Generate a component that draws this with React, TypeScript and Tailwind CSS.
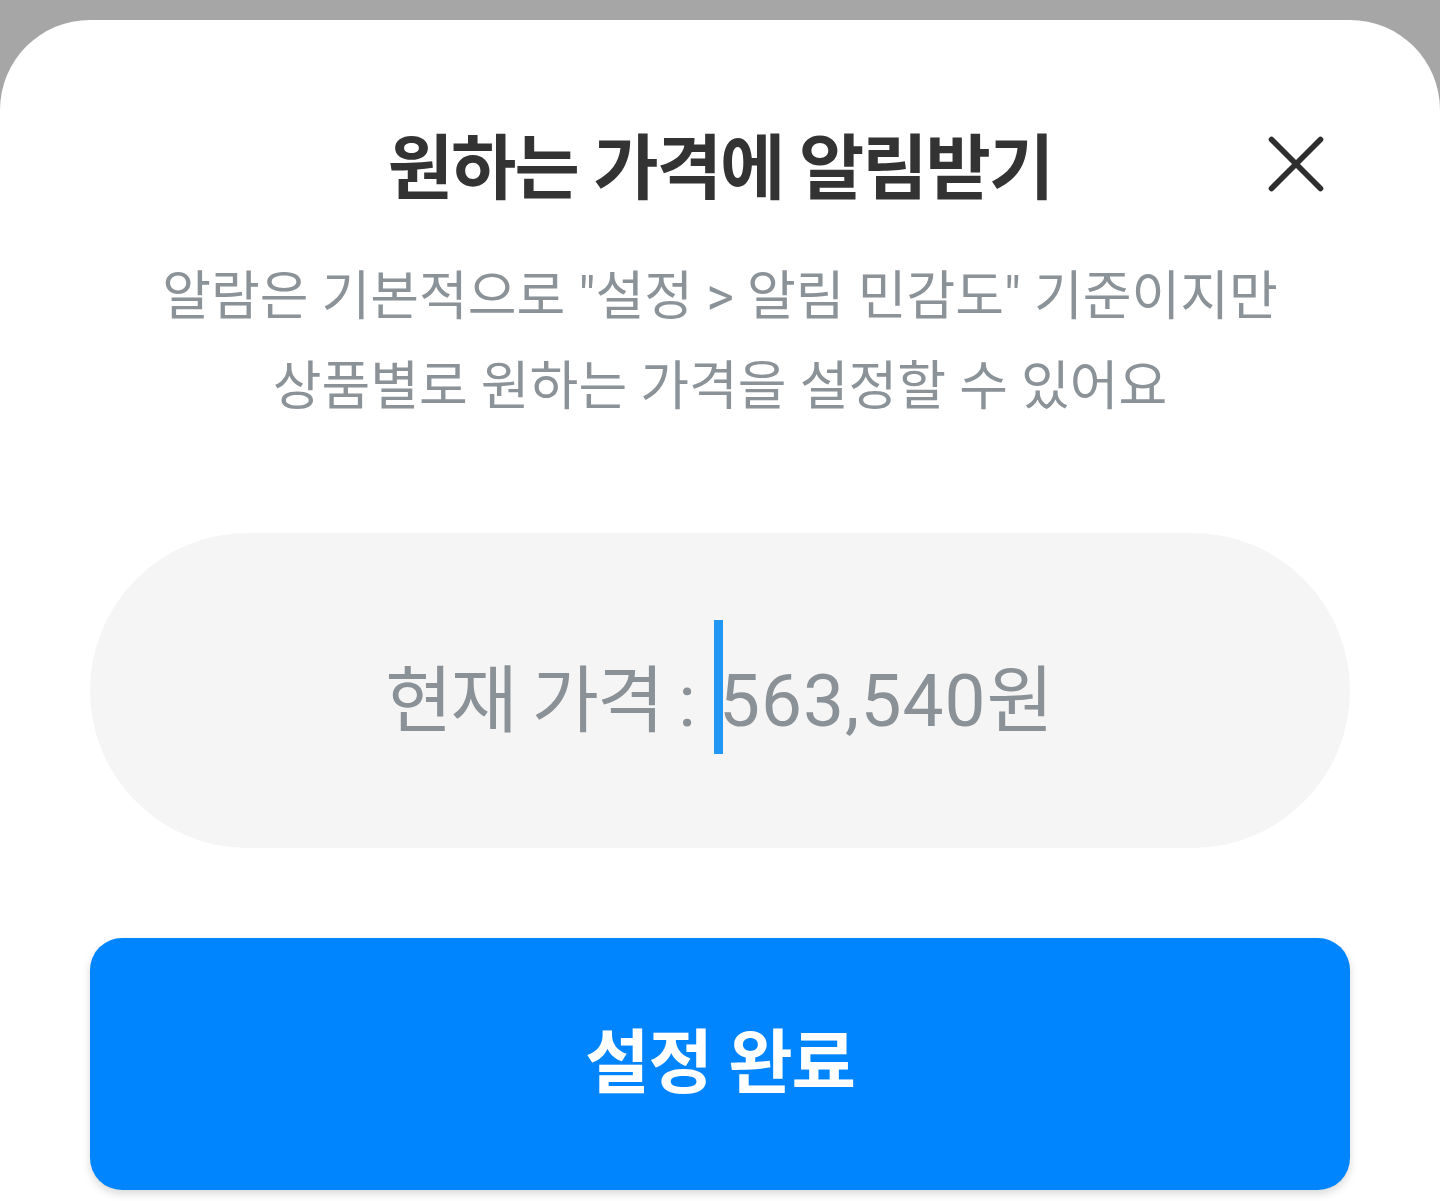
export default function App() {
  return (
    <div
      className="w-[1440px] h-[1201px] bg-[#a6a6a6] pt-[20px] overflow-hidden"
      style={{ fontFamily: 'Roboto, "Noto Sans CJK KR", sans-serif' }}
    >
      <div className="h-full bg-white rounded-t-[90px] px-[90px] flex flex-col">
        {/* Header */}
        <div className="relative flex justify-center pt-[113px]">
          <h2 className="text-[71px] leading-none font-bold text-[#333333] tracking-[-2px]">
            원하는 가격에 알림받기
          </h2>
          <button
            type="button"
            className="absolute right-[12px] top-[102px] w-[84px] h-[84px] flex items-center justify-center"
          >
            <svg viewBox="0 0 24 24" className="w-[84px] h-[84px]" fill="none">
              <path
                d="M5 5L19 19M19 5L5 19"
                stroke="#2e2e2e"
                strokeWidth="1.6"
                strokeLinecap="round"
              />
            </svg>
          </button>
        </div>

        {/* Description */}
        <p className="mt-[48px] text-center text-[53px] leading-[90px] text-[#8b9399]">
          알람은 기본적으로 "설정 &gt; 알림 민감도" 기준이지만
          <br />
          상품별로 원하는 가격을 설정할 수 있어요
        </p>

        {/* Price input */}
        <div className="mt-[101px] h-[315px] rounded-full bg-[#f5f5f5] flex items-center justify-center pt-[22px]">
          <span className="text-[73px] leading-none text-[#8a9197] flex items-center">
            <span className="tracking-[-2px]">현재 가격 :&nbsp;</span>
            <span className="inline-block w-[9px] h-[134px] bg-[#2196f3] ml-[4px] -mr-[4px] -mt-[30px] relative z-10" />
            <span className="tracking-[1px]">563,540원</span>
          </span>
        </div>

        {/* Submit */}
        <button
          type="button"
          className="mt-[90px] h-[252px] w-full rounded-[32px] bg-[#0085ff] shadow-[0_4px_8px_rgba(0,0,0,0.15)] text-white text-[70px] font-bold tracking-[-1px]"
        >
          설정 완료
        </button>
      </div>
    </div>
  );
}
